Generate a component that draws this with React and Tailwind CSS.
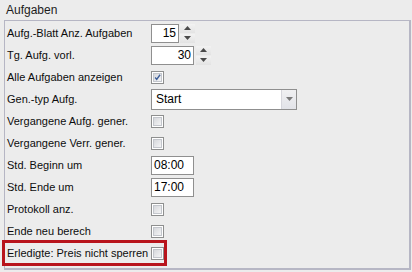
import React from 'react';

const rows = [
  { label: 'Aufg.-Blatt Anz. Aufgaben', type: 'spin', value: '15', width: 'w-[28px]', gap: 'gap-[1px]' },
  { label: 'Tg. Aufg. vorl.', type: 'spin', value: '30', width: 'w-[43px]', gap: 'gap-[2px]' },
  { label: 'Alle Aufgaben anzeigen', type: 'check', checked: true },
  { label: 'Gen.-typ Aufg.', type: 'combo', value: 'Start' },
  { label: 'Vergangene Aufg. gener.', type: 'check' },
  { label: 'Vergangene Verr. gener.', type: 'check' },
  { label: 'Std. Beginn um', type: 'text', value: '08:00' },
  { label: 'Std. Ende um', type: 'text', value: '17:00' },
  { label: 'Protokoll anz.', type: 'check' },
  { label: 'Ende neu berech', type: 'check' },
  { label: 'Erledigte: Preis nicht sperren', type: 'check', highlight: true },
];

function Checkbox({ checked }) {
  return (
    <div className="w-[13px] h-[13px] border border-[#8e8f8f] bg-white p-[1px]">
      <div className="w-full h-full border border-[#c3c6cc] bg-gradient-to-br from-[#d6d8dc] to-[#f4f4f5] flex items-center justify-center">
        {checked && (
          <svg width="9" height="9" viewBox="0 0 9 9">
            <path d="M1.5 4.5 L3.5 7 L7.8 1" fill="none" stroke="#3d5f9a" strokeWidth="1.8" />
          </svg>
        )}
      </div>
    </div>
  );
}

function Spinner() {
  return (
    <div className="flex flex-col w-[15px] h-[19px] gap-[1px]">
      <div className="flex-1 bg-gradient-to-b from-[#f2f2f2] to-[#e3e3e3] flex items-center justify-center">
        <svg width="7" height="4" viewBox="0 0 7 4">
          <path d="M0 4 L3.5 0 L7 4 Z" fill="#4a4a4a" />
        </svg>
      </div>
      <div className="flex-1 bg-gradient-to-b from-[#f2f2f2] to-[#e3e3e3] flex items-center justify-center">
        <svg width="7" height="4" viewBox="0 0 7 4">
          <path d="M0 0 L7 0 L3.5 4 Z" fill="#4a4a4a" />
        </svg>
      </div>
    </div>
  );
}

function Control({ row }) {
  if (row.type === 'spin') {
    return (
      <div className={`flex items-center ${row.gap}`}>
        <div className={`${row.width} h-[19px] border border-[#8f8f8f] bg-white flex items-center justify-end pr-[2px] text-[12px] text-black`}>
          {row.value}
        </div>
        <Spinner />
      </div>
    );
  }
  if (row.type === 'check') return <Checkbox checked={row.checked} />;
  if (row.type === 'combo') {
    return (
      <div className="w-[146px] h-[21px] border border-[#8f8f8f] bg-white flex">
        <div className="flex-1 pl-[4px] flex items-center text-[12px] text-black">{row.value}</div>
        <div className="w-[15px] border-l border-[#d6d6dc] bg-gradient-to-b from-[#f0f0f2] to-[#e2e3e8] flex items-center justify-center">
          <svg width="7" height="4" viewBox="0 0 7 4">
            <path d="M0 0 L7 0 L3.5 4 Z" fill="#7a7a7a" />
          </svg>
        </div>
      </div>
    );
  }
  return (
    <div className="w-[43px] h-[19px] border border-[#8f8f8f] bg-white flex items-center pl-[2px] text-[12px] text-black">
      {row.value}
    </div>
  );
}

export default function App() {
  return (
    <div className="w-[412px] h-[272px] bg-[#ececec] font-['Liberation_Sans',Arial,sans-serif] text-[11px] text-[#0c0c0c]">
      <div className="h-[20px] pl-[6px] flex items-center text-[12px] text-[#1c1c1c]">Aufgaben</div>
      <div className="ml-[4px] mr-[1px] h-[250px] border-t border-l border-r-2 border-b-2 border-[#b6b6c4] pt-[1px]">
        {rows.map((row, i) => (
          <div key={i} className="relative h-[22px] grid grid-cols-[146px_auto] items-center">
            {row.highlight && (
              <div className="absolute left-[-3px] top-[-2px] w-[165px] h-[26px] border-[3px] border-[#b8141c]" />
            )}
            <div className="pl-[2px] whitespace-nowrap">{row.label}</div>
            <div className="flex items-center">
              <Control row={row} />
            </div>
          </div>
        ))}
      </div>
    </div>
  );
}
